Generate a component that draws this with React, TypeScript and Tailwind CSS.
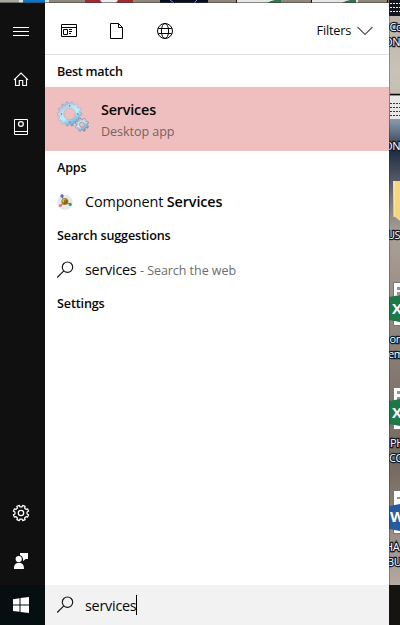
import React from "react";

const ui = "font-['Open_Sans','Noto_Sans',sans-serif]";

function SearchIcon() {
  return (
    <svg width="18" height="18" viewBox="0 0 18 18" fill="none" stroke="#161616" strokeWidth="1.15" className="shrink-0">
      <circle cx="11.5" cy="6.2" r="5.2" />
      <path d="M7.8 9.9 L1.2 16.5" />
    </svg>
  );
}

function gearPath(cx: number, cy: number, teeth: number, outer: number, inner: number, turn = 0) {
  const pts: string[] = [];
  const step = (Math.PI * 2) / teeth;
  for (let i = 0; i < teeth; i++) {
    const a = (i + turn) * step - Math.PI / 2;
    const corners: [number, number][] = [[-0.3, inner], [-0.21, outer], [0.21, outer], [0.3, inner]];
    for (const [o, r] of corners) {
      pts.push(`${(cx + Math.cos(a + o * step) * r).toFixed(2)} ${(cy + Math.sin(a + o * step) * r).toFixed(2)}`);
    }
  }
  return `M${pts.join("L")}Z`;
}

function ServicesIcon() {
  return (
    <svg width="34" height="34" viewBox="0 0 34 34" className="shrink-0">
      <defs>
        <linearGradient id="gear" x1="0.1" y1="0" x2="0.7" y2="1">
          <stop offset="0" stopColor="#86a4c4" />
          <stop offset="0.35" stopColor="#c6dcf0" />
          <stop offset="0.6" stopColor="#b4f0fc" />
          <stop offset="1" stopColor="#6795c6" />
        </linearGradient>
        <linearGradient id="smallGear" x1="0" y1="0" x2="0.8" y2="1">
          <stop offset="0" stopColor="#9fb8d0" />
          <stop offset="0.5" stopColor="#d3ebf8" />
          <stop offset="1" stopColor="#5f88b4" />
        </linearGradient>
      </defs>
      <path fillRule="evenodd" fill="url(#gear)" stroke="#7f9ebe" strokeWidth="0.4"
        d={gearPath(13.6, 14, 14, 12.3, 10.4, 0.5) + "M19.4 14a5.8 5.8 0 1 0-11.6 0a5.8 5.8 0 1 0 11.6 0Z"} />
      <g fill="#48647e"><circle cx="13.7" cy="5.9" r=".65" /><circle cx="5.4" cy="14" r=".65" /><circle cx="21.8" cy="14" r=".65" /><circle cx="13.7" cy="22.1" r=".65" /></g>
      <path fillRule="evenodd" fill="url(#smallGear)" stroke="#5f7fa0" strokeWidth="0.5"
        d={gearPath(26, 24.7, 8, 6.8, 5, 0.5) + "M28.5 24.7a2.5 2.5 0 1 0-5 0a2.5 2.5 0 1 0 5 0Z"} />
    </svg>
  );
}

function ComponentIcon() {
  return (
    <svg width="16" height="16" viewBox="0 0 16 16" className="shrink-0">
      <circle cx="8" cy="8.3" r="7.3" fill="#e4e9f2" stroke="#d8dde6" strokeWidth=".5" />
      <path d="M7.5 7.5L5 2.5M8 8L13.5 10.5M7 8L3.5 12" stroke="#777" strokeWidth="1" />
      <circle cx="7.8" cy="7.4" r="3.5" fill="#a87c14" />
      <circle cx="7" cy="6.5" r="1.9" fill="#dab63c" />
      <path d="M7.9 5.8v4M9.9 6v2.8" stroke="#5b3b0c" strokeWidth=".8" />
      <circle cx="5" cy="2" r="1.7" fill="#5f64d5" />
      <circle cx="13.2" cy="10.4" r="1.6" fill="#33a146" />
      <circle cx="3.4" cy="11.4" r="1.5" fill="#e4777c" />
    </svg>
  );
}

function Rail() {
  return (
    <nav className="flex w-[45px] shrink-0 flex-col items-center bg-[#101010] text-white">
      <svg width="45" height="150" viewBox="0 3 45 150" fill="none" stroke="currentColor" strokeWidth="1">
        <path d="M13 27.5h16M13 31.5h16M13 35.5h16" />
        <path d="M14 79.8L21 73l7 6.8M15.5 78.6v6.9h3.8v-5h3.4v5h3.8v-6.9" strokeWidth="1.15" />
        <path d="M14.5 119.5h13v15h-13zM14.5 131.5h13" />
        <circle cx="20.9" cy="124" r="2.4" strokeWidth="1.25" />
      </svg>
      <div className="grow" />
      <svg width="45" height="95" viewBox="0 490 45 95" fill="none" stroke="currentColor">
        <path d={gearPath(21, 513, 8, 7.8, 6.1, 0.5)} strokeWidth="1.25" strokeLinejoin="round" />
        <circle cx="21" cy="513" r="2.7" strokeWidth="1.25" />
        <g fill="currentColor" stroke="none">
          <circle cx="18.7" cy="559" r="3.1" />
          <path d="M14 569v-1.4a4.9 4.9 0 0 1 9.9 0v1.4zM20 553h8v6h-2.5l-2.4 2.3v-2.4q-.4-3-3.1-3.9z" />
        </g>
      </svg>
    </nav>
  );
}

function Heading({ children }: { children: React.ReactNode }) {
  return <h2 className="flex h-[34px] items-center pl-3 text-[12.6px] font-semibold tracking-[-0.15px]">{children}</h2>;
}

function ResultsPanel() {
  return (
    <main className="w-[344px] shrink-0 bg-white text-[#080808]">
      <header className="flex h-[52px] justify-between border-b border-[#dfdfdf]">
        <svg width="140" height="51" viewBox="45 3 140 51" fill="none" stroke="#000" strokeWidth="1">
          <path d="M61.5 24.5h15v12h-15zM61.5 27.5h15M63.5 29.5h4v5h-4zM69 29.5h3M69 31.5h3M69 33.5h2" />
          <path d="M110.5 23.5h8l4 4v11h-12zM118.5 23.5v4h4" />
          <circle cx="165" cy="31" r="7.5" />
          <ellipse cx="165" cy="31" rx="3.6" ry="7.5" />
          <path d="M158.3 28.5h13.4M158.3 33.5h13.4" />
        </svg>
        <button className="flex items-center gap-[6px] pr-4 pt-1 text-[12.7px] tracking-[-0.2px]">
          <span>Filters</span>
          <svg width="16" height="10" viewBox="0 0 16 10" fill="none" stroke="#555" strokeWidth="1.2"><path d="M.5 1L8 8.5 15.5 1" /></svg>
        </button>
      </header>
      <h2 className="flex h-8 items-center pl-3 pt-0.5 text-[12.6px] font-semibold tracking-[-0.28px]">Best match</h2>
      <section className="flex h-16 items-center bg-[#efbfbf] pl-[11px]">
        <div className="pb-1"><ServicesIcon /></div>
        <div className="ml-[11px] pt-[3px]">
          <div className="text-[14.4px] font-semibold leading-[22px] tracking-[-0.2px]">Services</div>
          <div className="text-[12.6px] leading-[22px] tracking-[-0.08px] text-[#795f5f]">Desktop app</div>
        </div>
      </section>
      <Heading>Apps</Heading>
      <div className="flex h-[34px] items-center gap-3 pl-3 text-[14.4px] tracking-[-0.13px]">
        <ComponentIcon />
        <span>Component <b className="font-semibold">Services</b></span>
      </div>
      <Heading>Search suggestions</Heading>
      <div className="flex h-[34px] items-center gap-[11px] pl-[11px] text-[14.4px] tracking-[-0.25px]">
        <SearchIcon />
        <span>services <span className="text-[12.5px] tracking-[-0.05px] text-[#6d6d6d]">- Search the web</span></span>
      </div>
      <Heading>Settings</Heading>
    </main>
  );
}

function Desktop() {
  return (
    <aside className="relative w-[11px] shrink-0 overflow-hidden bg-[linear-gradient(180deg,#b9aea2_0%,#c8c2b8_12%,#c4beb2_16%,#8191a4_21%,#212e46_26%,#76777c_34%,#aaa096_40%,#81776e_65%,#746a60_80%,#b5a9a2_100%)]">
      <svg width="11" height="585" viewBox="389 0 11 585" className="font-['Open_Sans',sans-serif]">
        <path d="M389 0h11v16h-11z" fill="#14171d" />
        <path d="M390 3.5h10M390 7.5h10M390 11.5h10" stroke="#ece9e4" strokeDasharray="2 1" />
        <path d="M390 94.5h10" stroke="#080808" strokeWidth="1.5" />
        <path d="M390 96h10v23h-10z" fill="#e8e8e6" />
        <path d="M390 103.5h10M390 107.5h10M390 111.5h10M390 115.5h10" stroke="#303743" strokeDasharray="2 1" />
        <path d="M393 181h7v40l-6-5z" fill="#f5d781" />
        <path d="M394 181v36" stroke="#fff1b8" />
        <g fill="#fff" stroke="#777"><path d="M393.5 282.5h10v43h-10zM393.5 387.5h10v42h-10zM393.5 490.5h10v43h-10z" /></g>
        <path d="M397 287h3v3h-3zM397 292h3v3h-3zM397 391h3v3h-3zM397 397h3v3h-3zM397 497h3v2h-3z" fill="#929292" />
        <path d="M389 297l11-2v27l-11-2zM389 401l11-2v27l-11-2z" fill="#207746" />
        <path d="M389 506l11-2v27l-11-2z" fill="#285a9e" />
        <g fill="#fff" fontSize="15" fontWeight="700"><text x="392" y="314">X</text><text x="392" y="418">X</text><text x="390" y="522">W</text></g>
        <g fill="#fff" stroke="#111a29" strokeWidth="2.5" paintOrder="stroke" fontSize="11" letterSpacing="-.4">
          <text x="389.5" y="31">Co</text><text x="384" y="46">ON</text><text x="384" y="150">ON</text>
          <text x="387" y="239">US</text><text x="389.5" y="343">on</text><text x="388" y="358">em</text>
          <text x="390" y="447">PH</text><text x="389" y="462">CO</text><text x="385" y="551">HA</text><text x="387" y="566">BU</text>
        </g>
        <path d="M389.5 0v585" stroke="#292827" strokeOpacity=".35" />
      </svg>
    </aside>
  );
}

export default function App() {
  return (
    <div className={`${ui} flex h-[625px] w-[400px] flex-col overflow-hidden`}>
      <div className="flex h-[585px]">
        <div className="flex w-[389px] shrink-0 flex-col">
          <svg width="389" height="3" viewBox="0 0 389 3" className="block shrink-0">
            <path d="M0 0h389v3H0z" fill="#91877b" />
            <path d="M0 0h19v3H0z" fill="#a7a99e" />
            <path d="M19 0h4v3h-4zM45 0h4v3h-4z" fill="#dfe4ea" />
            <path d="M23 0h22v3H23z" fill="#0876cc" />
            <path d="M85 0h48v3H85z" fill="#a32a31" />
            <path d="M100 0h18l-2 3h-14z" fill="#eee" />
            <path d="M160 0h48v3h-48z" fill="#080c1c" />
            <path d="M170 0l4 3M197 0l-3 3" stroke="#7f88dd" />
            <path d="M236 0h41v3h-41zM311 0h47v3h-47z" fill="#e5e7e5" />
            <path d="M236.5 0v3M311.5 0v3M387.5 0v3" stroke="#111" />
            <path d="M267 3q3-2 8-3h6v3zM342 3q3-2 8-3h6v3z" fill="#2c7650" />
            <path d="M0 2.5h389" stroke="#3d3a37" strokeOpacity=".55" />
          </svg>
          <div className="flex grow"><Rail /><ResultsPanel /></div>
        </div>
        <Desktop />
      </div>
      <footer className="flex h-10 bg-[#151411]">
        <div className="flex w-[45px] shrink-0 items-center justify-center bg-[#050f11] pr-[3px]">
          <svg width="16" height="16" viewBox="0 0 16 16" fill="white"><path d="M0 2.2L6.5 1.3V7.5H0zM7.5 1.1L16 0v7.5H7.5zM0 8.5h6.5v6.3L0 13.9zM7.5 8.5H16V16l-8.5-1.1z" /></svg>
        </div>
        <div className="flex w-[344px] items-center gap-[11px] bg-[#f2f2f2] pl-[11px] text-[14.4px] tracking-[-0.25px] text-[#080808]">
          <SearchIcon />
          <span className="flex items-center pt-px">services<i className="h-5 w-px bg-black" /></span>
        </div>
      </footer>
    </div>
  );
}
